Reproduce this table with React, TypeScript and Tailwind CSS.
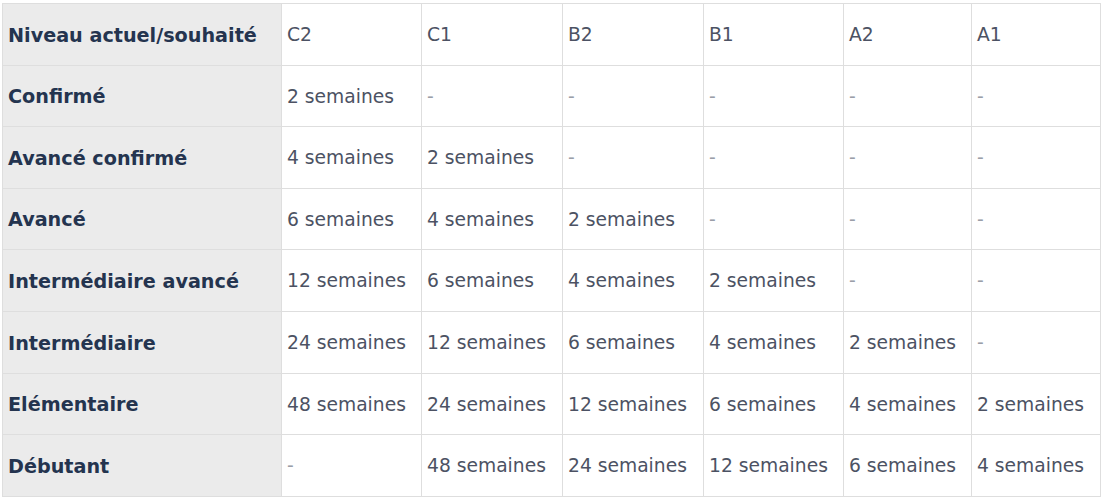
import React from "react";

const levels = ["C2", "C1", "B2", "B1", "A2", "A1"];

const rows: { label: string; cells: string[] }[] = [
  { label: "Confirmé", cells: ["2 semaines", "-", "-", "-", "-", "-"] },
  { label: "Avancé confirmé", cells: ["4 semaines", "2 semaines", "-", "-", "-", "-"] },
  { label: "Avancé", cells: ["6 semaines", "4 semaines", "2 semaines", "-", "-", "-"] },
  { label: "Intermédiaire avancé", cells: ["12 semaines", "6 semaines", "4 semaines", "2 semaines", "-", "-"] },
  { label: "Intermédiaire", cells: ["24 semaines", "12 semaines", "6 semaines", "4 semaines", "2 semaines", "-"] },
  { label: "Elémentaire", cells: ["48 semaines", "24 semaines", "12 semaines", "6 semaines", "4 semaines", "2 semaines"] },
  { label: "Débutant", cells: ["-", "48 semaines", "24 semaines", "12 semaines", "6 semaines", "4 semaines"] },
];

const colWidths = ["w-[279px]", "w-[140px]", "w-[141px]", "w-[141px]", "w-[140px]", "w-[128px]", "w-[129px]"];

const App = () => {
  return (
    <div className="min-h-screen bg-white pt-[3px] pl-[2px] font-['DejaVu_Sans',Verdana,sans-serif]">
      <table className="table-fixed border-collapse border border-[#dedede] w-[1098px] text-[18.7px] leading-none">
        <colgroup>
          {colWidths.map((w, i) => (
            <col key={i} className={w} />
          ))}
        </colgroup>
        <tbody>
          {/* Header row */}
          <tr className="h-[61.6px]">
            <td className="bg-[#ebebeb] border border-[#dedede] px-[5px] pt-[2px] text-[19.2px] font-bold text-[#24344f] whitespace-nowrap">
              Niveau actuel/souhaité
            </td>
            {levels.map((l) => (
              <td key={l} className="border border-[#dedede] px-[5px] pt-[2px] text-[#4c5263]">
                {l}
              </td>
            ))}
          </tr>
          {rows.map((r) => (
            <tr key={r.label} className="h-[61.6px]">
              <td className="bg-[#ebebeb] border border-[#dedede] px-[5px] pt-[2px] text-[19.2px] font-bold text-[#24344f] whitespace-nowrap">
                {r.label}
              </td>
              {r.cells.map((c, i) => (
                <td
                  key={i}
                  className={
                    c === "-"
                      ? "border border-[#dedede] px-[5px] pt-[2px] text-[#9a9ea8] whitespace-nowrap"
                      : "border border-[#dedede] px-[5px] pt-[2px] text-[#4c5263] whitespace-nowrap"
                  }
                >
                  {c}
                </td>
              ))}
            </tr>
          ))}
        </tbody>
      </table>
    </div>
  );
};

export default App;
